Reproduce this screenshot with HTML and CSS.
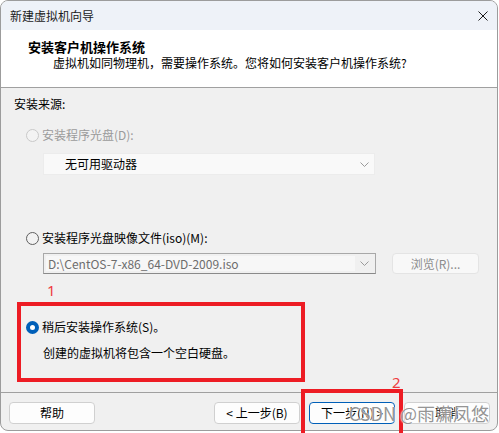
FILE: index.html
```html
<!DOCTYPE html>
<html lang="zh-CN">
<head>
<meta charset="utf-8">
<title>新建虚拟机向导</title>
<link rel="stylesheet" href="styles.css">
</head>
<body>
<div class="window">
  <div class="titlebar">
    <span class="title">新建虚拟机向导</span>
    <svg class="close" width="10" height="10" viewBox="0 0 10 10"><path d="M0.5 0.5 L9.5 9.5 M9.5 0.5 L0.5 9.5" stroke="#1b1b1b" stroke-width="1" fill="none"/></svg>
  </div>
  <div class="header">
    <div class="h-title">安装客户机操作系统</div>
    <div class="h-sub">虚拟机如同物理机，需要操作系统。您将如何安装客户机操作系统?</div>
  </div>
  <div class="content">
    <div class="section-label">安装来源:</div>
    <div class="radio-row disabled r1"><span class="radio"></span><span>安装程序光盘(D):</span></div>
    <div class="select s1">
      <span class="val">无可用驱动器</span>
      <svg class="chev" width="9" height="5" viewBox="0 0 9 5"><path d="M0.5 0.5 L4.5 4.5 L8.5 0.5" stroke="#9a9a9a" stroke-width="1" fill="none"/></svg>
    </div>
    <div class="radio-row r2"><span class="radio"></span><span>安装程序光盘映像文件(iso)(M):</span></div>
    <div class="iso-row">
      <div class="select s2">
        <span class="field">D:\CentOS-7-x86_64-DVD-2009.iso</span>
        <span class="arrow"><svg width="9" height="5" viewBox="0 0 9 5"><path d="M0.5 0.5 L4.5 4.5 L8.5 0.5" stroke="#9a9a9a" stroke-width="1" fill="none"/></svg></span>
      </div>
      <div class="browse">浏览(R)...</div>
    </div>
    <div class="radio-row r3"><span class="radio checked"></span><span>稍后安装操作系统(S)。</span></div>
    <div class="desc">创建的虚拟机将包含一个空白硬盘。</div>
  </div>
  <div class="footer">
    <div class="btn">帮助</div>
    <div class="spacer"></div>
    <div class="btn">&lt; 上一步(B)</div>
    <div class="btn primary">下一步(N) &gt;</div>
    <div class="btn">取消</div>
  </div>
</div>
<div class="mark box1"></div>
<div class="num n1">1</div>
<div class="mark box2"></div>
<div class="num n2">2</div>
<div class="watermark">CSDN @雨潇凤悠</div>
</body>
</html>
```
FILE: styles.css
```css
html, body {
  margin: 0;
  background: #ffffff;
}
body {
  width: 499px;
  height: 433px;
  position: relative;
  overflow: hidden;
  font-family: "Noto Sans CJK SC", "Noto Sans", sans-serif;
  font-size: 12px;
  color: #000;
}
.window {
  box-sizing: border-box;
  width: 498px;
  height: 431px;
  border: 1px solid #9c9c9c;
  border-radius: 8px;
  overflow: hidden;
  display: flex;
  flex-direction: column;
  background: #f0f0f0;
}
.titlebar {
  flex: none;
  height: 29px;
  background: #eef2f8;
  display: flex;
  align-items: center;
  justify-content: space-between;
  padding: 0 9px;
}
.title {
  line-height: 16px;
  color: #1a1a1a;
}
.close {
  display: block;
}
.header {
  flex: none;
  box-sizing: border-box;
  height: 58px;
  background: #ffffff;
  border-bottom: 1px solid #a0a0a0;
  padding: 9px 0 0 27px;
}
.h-title {
  font-size: 13px;
  font-weight: bold;
  line-height: 16px;
}
.h-sub {
  margin-left: 25px;
  line-height: 16px;
}
.content {
  flex: 1;
  padding: 8px 0 0 13px;
}
.section-label {
  line-height: 16px;
}
.radio-row {
  display: flex;
  align-items: center;
  gap: 3px;
  margin-left: 12px;
  line-height: 16px;
}
.radio {
  box-sizing: border-box;
  width: 13px;
  height: 13px;
  border-radius: 50%;
  border: 1px solid #5f5f5f;
  background: #f2f2f2;
  flex: none;
}
.disabled {
  color: #9b9b9b;
}
.disabled .radio {
  border-color: #c9c9c9;
  background: #f3f3f3;
}
.radio.checked {
  border: 4px solid #005fb8;
  background: #ffffff;
}
.r1 { margin-top: 15px; }
.r2 { margin-top: 55px; }
.r3 { margin-top: 45px; }
.select {
  box-sizing: border-box;
  margin-left: 29px;
  display: flex;
  align-items: center;
}
.s1 {
  margin-top: 10px;
  width: 332px;
  height: 22px;
  background: #f9f9f9;
  border: 1px solid #ececec;
  padding: 0 5px 0 21px;
  justify-content: space-between;
}
.val {
  line-height: 16px;
}
.chev {
  display: block;
}
.iso-row {
  display: flex;
  align-items: center;
  gap: 16px;
  margin-top: 7px;
}
.s2 {
  width: 333px;
  height: 21px;
  border: 1px solid #a8a8a8;
  border-bottom-color: #8a8a8a;
  padding: 2px;
}
.field {
  flex: 1;
  align-self: stretch;
  background: #f7f7f7;
  color: #6d6d6d;
  line-height: 15px;
  padding-left: 2px;
}
.arrow {
  width: 18px;
  display: flex;
  justify-content: center;
  align-items: center;
}
.arrow svg {
  display: block;
}
.browse {
  box-sizing: border-box;
  width: 87px;
  height: 21px;
  border: 1px solid #e4e4e4;
  border-radius: 4px;
  background: #f8f8f8;
  color: #8b8b8b;
  display: flex;
  align-items: center;
  justify-content: center;
}
.desc {
  margin: 10px 0 0 29px;
  line-height: 16px;
}
.footer {
  flex: none;
  box-sizing: border-box;
  height: 38px;
  border-top: 1px solid #a0a0a0;
  padding: 9px 7px 0 8px;
  display: flex;
  align-items: flex-start;
  gap: 9px;
}
.spacer {
  flex: 1;
}
.btn {
  box-sizing: border-box;
  width: 86px;
  height: 22px;
  border: 1px solid #d0d0d0;
  border-radius: 4px;
  background: #fdfdfd;
  display: flex;
  align-items: center;
  justify-content: center;
  line-height: 16px;
}
.btn.primary {
  border-color: #005fb8;
}
.mark {
  position: absolute;
  box-sizing: border-box;
  border: 4px solid #ed1c24;
}
.box1 {
  left: 17px;
  top: 302px;
  width: 288px;
  height: 80px;
}
.box2 {
  left: 301px;
  top: 389px;
  width: 102px;
  height: 60px;
}
.num {
  position: absolute;
  font-family: "Noto Sans", sans-serif;
  font-size: 15px;
  line-height: 15px;
  color: #ee3b40;
}
.n1 {
  left: 47px;
  top: 283px;
}
.n2 {
  left: 392px;
  top: 375px;
}
.watermark {
  position: absolute;
  right: 10px;
  top: 402px;
  font-size: 18px;
  line-height: 22px;
  color: rgba(120, 120, 120, 0.8);
  text-shadow: 0 0 1px #ffffff, 0 0 2px #ffffff;
  white-space: nowrap;
}
```
